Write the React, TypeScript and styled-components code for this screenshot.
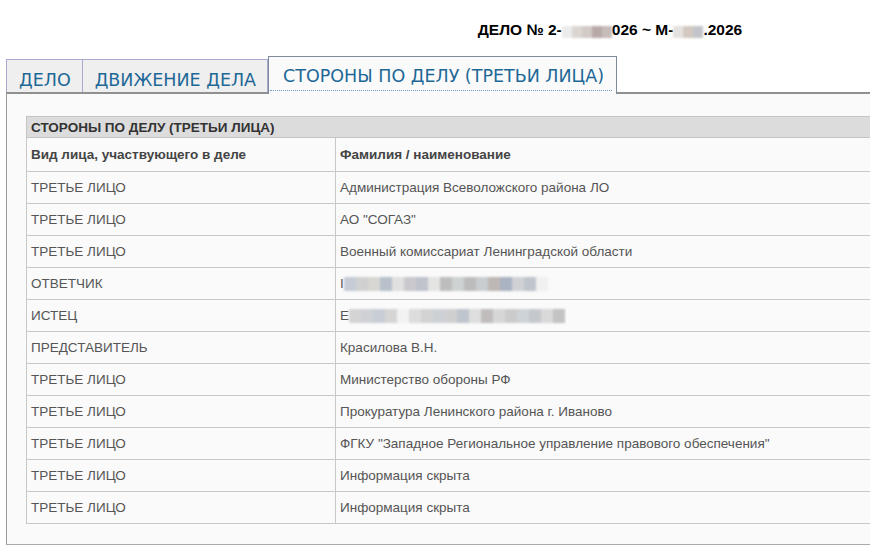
import React from "react";
import styled, { createGlobalStyle } from "styled-components";

const GlobalStyle = createGlobalStyle`
    html, body {
        margin: 0;
        padding: 0;
        background: #ffffff;
        overflow: hidden;
    }
    body {
        font-family: "Liberation Sans", Arial, sans-serif;
    }
`;

type Party = {
    kind: string;
    name: string;
    hidden?: string[];
};

const TITLE_BLUR_A = ["#ececec", "#dcd6d2", "#d2cac7", "#b8aaa8", "#c6bcba"];
const TITLE_BLUR_B = ["#e4e2e1", "#d3c9c2", "#c4c5ca"];

const DEFENDANT_BLUR = [
    "#c6ccd6", "#d0d0d0", "#d8d6d2", "#b8c0cc", "#e0e0e0", "#cac8cc", "#bfc3cc",
    "#e4e4e2", "#bdbdbd", "#cdd2d2", "#bcbcbc", "#c9cdcf", "#bfb7b5", "#aab3c2",
    "#cfd1d5", "#bfc5cc", "#f0f0f0",
];
const PLAINTIFF_BLUR = [
    "#d4d4d4", "#cfd1d6", "#c9ced6", "#d6d4d4", "#f2f2f2", "#dcdcdc", "#d3d3d3",
    "#cdd1d6", "#cfcfcf", "#bfc5cd", "#dedede", "#c0bcbc", "#d6d6d6", "#cbcbcb",
    "#ced3d8", "#c5c8cc", "#d9d9d9", "#c3c3c3",
];

const PARTIES: Party[] = [
    { kind: "ТРЕТЬЕ ЛИЦО", name: "Администрация Всеволожского района ЛО" },
    { kind: "ТРЕТЬЕ ЛИЦО", name: "АО \"СОГАЗ\"" },
    { kind: "ТРЕТЬЕ ЛИЦО", name: "Военный комиссариат Ленинградской области" },
    { kind: "ОТВЕТЧИК", name: "І", hidden: DEFENDANT_BLUR },
    { kind: "ИСТЕЦ", name: "Е", hidden: PLAINTIFF_BLUR },
    { kind: "ПРЕДСТАВИТЕЛЬ", name: "Красилова В.Н." },
    { kind: "ТРЕТЬЕ ЛИЦО", name: "Министерство обороны РФ" },
    { kind: "ТРЕТЬЕ ЛИЦО", name: "Прокуратура Ленинского района г. Иваново" },
    { kind: "ТРЕТЬЕ ЛИЦО", name: "ФГКУ \"Западное Региональное управление правового обеспечения\"" },
    { kind: "ТРЕТЬЕ ЛИЦО", name: "Информация скрыта" },
    { kind: "ТРЕТЬЕ ЛИЦО", name: "Информация скрыта" },
];

const TABS = [
    { label: "ДЕЛО", active: false },
    { label: "ДВИЖЕНИЕ ДЕЛА", active: false },
    { label: "СТОРОНЫ ПО ДЕЛУ (ТРЕТЬИ ЛИЦА)", active: true },
];

// Blurred fragment, drawn as a strip of soft squares
const Redacted: React.FC<{ colors: string[]; size?: number }> = ({ colors, size = 10 }) => (
    <Blur>
        {colors.map((c, i) => (
            <Pixel key={i} $c={c} $size={size} />
        ))}
    </Blur>
);

const App: React.FC = () => {
    return (
        <>
            <GlobalStyle />
            <Page>
                <Title>
                    ДЕЛО № 2-<Redacted colors={TITLE_BLUR_A} size={10} />026 ~ М-
                    <Redacted colors={TITLE_BLUR_B} size={10} />.2026
                </Title>

                <TabBar>
                    {TABS.map((t) =>
                        t.active ? (
                            <ActiveTab key={t.label}>
                                <ActiveLabel>{t.label}</ActiveLabel>
                            </ActiveTab>
                        ) : (
                            <Tab key={t.label}>{t.label}</Tab>
                        )
                    )}
                </TabBar>

                <Panel>
                    <Table>
                        <tbody>
                            <tr>
                                <Caption colSpan={2}>СТОРОНЫ ПО ДЕЛУ (ТРЕТЬИ ЛИЦА)</Caption>
                            </tr>
                            <tr>
                                <HeadCell $w={300}>Вид лица, участвующего в деле</HeadCell>
                                <HeadCell>Фамилия / наименование</HeadCell>
                            </tr>
                            {PARTIES.map((p, i) => (
                                <tr key={i}>
                                    <Cell>{p.kind}</Cell>
                                    <Cell>
                                        {p.name}
                                        {p.hidden && <Redacted colors={p.hidden} size={12} />}
                                    </Cell>
                                </tr>
                            ))}
                        </tbody>
                    </Table>
                </Panel>
            </Page>
        </>
    );
};

const Page = styled.div`
    width: 1220px;
    padding: 20px 0 0 6px;
`;

const Title = styled.div`
    text-align: center;
    font-family: "Liberation Sans", Arial, sans-serif;
    font-weight: bold;
    font-size: 15.5px;
    color: #000;
    height: 36px;
    line-height: 20px;
    padding-right: 12px;
`;

const Blur = styled.span`
    display: inline-flex;
    vertical-align: -3px;
    filter: blur(1.2px);
`;

const Pixel = styled.span<{ $c: string; $size: number }>`
    display: inline-block;
    width: ${(p) => p.$size}px;
    height: ${(p) => p.$size + 2}px;
    background: ${(p) => p.$c};
`;

const TabBar = styled.div`
    display: flex;
    align-items: flex-end;
    position: relative;
    z-index: 1;
    font-family: "DejaVu Sans", Verdana, sans-serif;
    font-size: 17.5px;
    color: #1d6896;
`;

const Tab = styled.div`
    height: 33px;
    padding: 8px 11px 0 12px;
    box-sizing: border-box;
    display: flex;
    align-items: center;
    background: #efefef;
    border: 1px solid #a9a9cf;
    border-bottom: none;
    & + & {
        border-left: none;
    }
`;

const ActiveTab = styled.div`
    margin-bottom: -2px;
    padding: 0 4px 3px 1px;
    background: #fafafa;
    border: 1px solid #7c8a99;
    border-bottom: none;
`;

const ActiveLabel = styled.div`
    height: 34px;
    box-sizing: border-box;
    padding: 4px 8px 0 13px;
    display: flex;
    align-items: center;
    border-bottom: 1px dotted #6f9cc4;
`;

const Panel = styled.div`
    width: 1200px;
    padding: 22px 0 20px 19px;
    background: #fafafa;
    border-top: 2px solid #909090;
    border-left: 1px solid #999;
    border-bottom: 1px solid #aaa;
`;

const Table = styled.table`
    width: 1160px;
    border-collapse: collapse;
    font-family: "Liberation Sans", Arial, sans-serif;
    font-size: 13.5px;
    color: #555;
`;

const Caption = styled.td`
    height: 20px;
    padding: 0 4px;
    background: #dcdcdc;
    border: 1px solid #c4c4c4;
    font-weight: bold;
    color: #333;
    text-align: left;
`;

const HeadCell = styled.td<{ $w?: number }>`
    height: 33px;
    padding: 0 4px;
    border: 1px solid #c8c8c8;
    font-weight: bold;
    color: #444;
    ${(p) => (p.$w ? `width: ${p.$w}px;` : "")}
`;

const Cell = styled.td`
    height: 31px;
    padding: 0 4px;
    border: 1px solid #c8c8c8;
    white-space: nowrap;
`;

export default App;
